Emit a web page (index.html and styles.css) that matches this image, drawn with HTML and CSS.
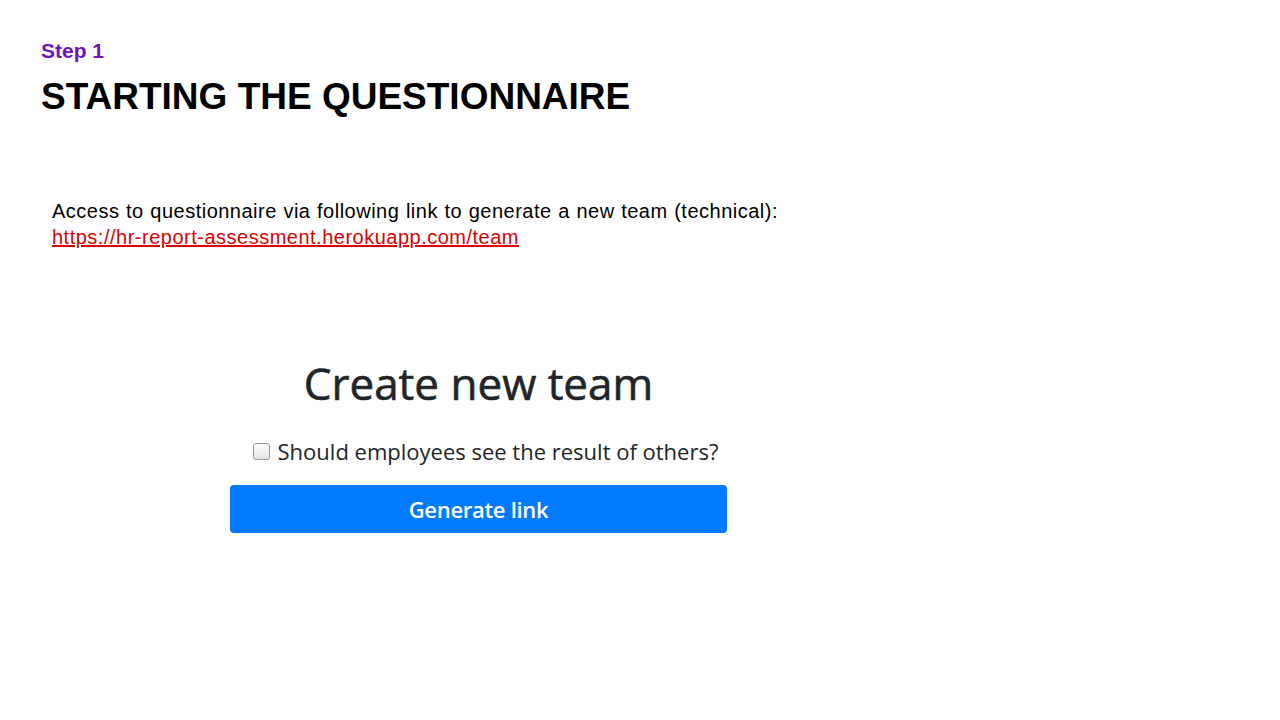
FILE: index.html
```html
<!DOCTYPE html>
<html>
<head>
<meta charset="utf-8">
<link rel="stylesheet" href="styles.css">
</head>
<body>
<div class="slide">
  <header class="head">
    <div class="step">Step 1</div>
    <h1 class="title">STARTING THE QUESTIONNAIRE</h1>
  </header>
  <section class="intro">
    <p class="intro-text">Access to questionnaire via following link to generate a new team (technical):</p>
    <a class="intro-link" href="#">https://hr-report-assessment.herokuapp.com/team</a>
  </section>
  <section class="shot">
    <h2 class="shot-title">Create new team</h2>
    <label class="shot-check">
      <span class="box"></span>
      <span>Should employees see the result of others?</span>
    </label>
    <button class="shot-btn">Generate link</button>
  </section>
</div>
</body>
</html>
```

FILE: styles.css
```css
* { box-sizing: border-box; }
html, body { margin: 0; padding: 0; background: #fff; }
.slide {
  width: 1280px;
  height: 720px;
  display: flex;
  flex-direction: column;
  padding: 39px 0 0 41px;
  font-family: "Liberation Sans", Arial, sans-serif;
}
.head { display: flex; flex-direction: column; }
.step {
  color: #7013b8;
  font-weight: bold;
  font-size: 21px;
  line-height: 24px;
}
.title {
  margin: 13px 0 0;
  font-size: 37px;
  font-weight: bold;
  line-height: 42px;
  color: #000;
}
.intro {
  margin: 80px 0 0 11px;
  width: 730px;
  display: flex;
  flex-direction: column;
  font-size: 20px;
  line-height: 26px;
  letter-spacing: 0.5px;
}
.intro-text { margin: 0; color: #000; white-space: nowrap; word-spacing: 0.5px; }
.intro-link { color: #e00000; text-decoration: underline; align-self: flex-start; }
.shot {
  margin: 105px 0 0 189px;
  width: 497px;
  display: flex;
  flex-direction: column;
  align-items: center;
  font-family: "Open Sans", "Noto Sans", sans-serif;
  color: #212529;
}
.shot-title {
  margin: 0;
  font-size: 44px;
  font-weight: 500;
  line-height: 56px;
  -webkit-text-stroke: 0.6px #212529;
}
.shot-check {
  margin-top: 25px;
  display: flex;
  align-items: center;
  gap: 8px;
  font-size: 22px;
  line-height: 30px;
  margin-left: 14px;
}
.box {
  width: 17px;
  height: 17px;
  border: 1px solid #9a9a9a;
  border-radius: 3px;
  background: linear-gradient(#fdfdfd, #e4e4e4);
}
.shot-btn {
  margin-top: 19px;
  width: 100%;
  height: 48px;
  border: none;
  border-radius: 4px;
  background: #007bff;
  color: #fff;
  font-family: "Open Sans", "Noto Sans", sans-serif;
  font-weight: 600;
  font-size: 22px;
  letter-spacing: -0.3px;
}
```
